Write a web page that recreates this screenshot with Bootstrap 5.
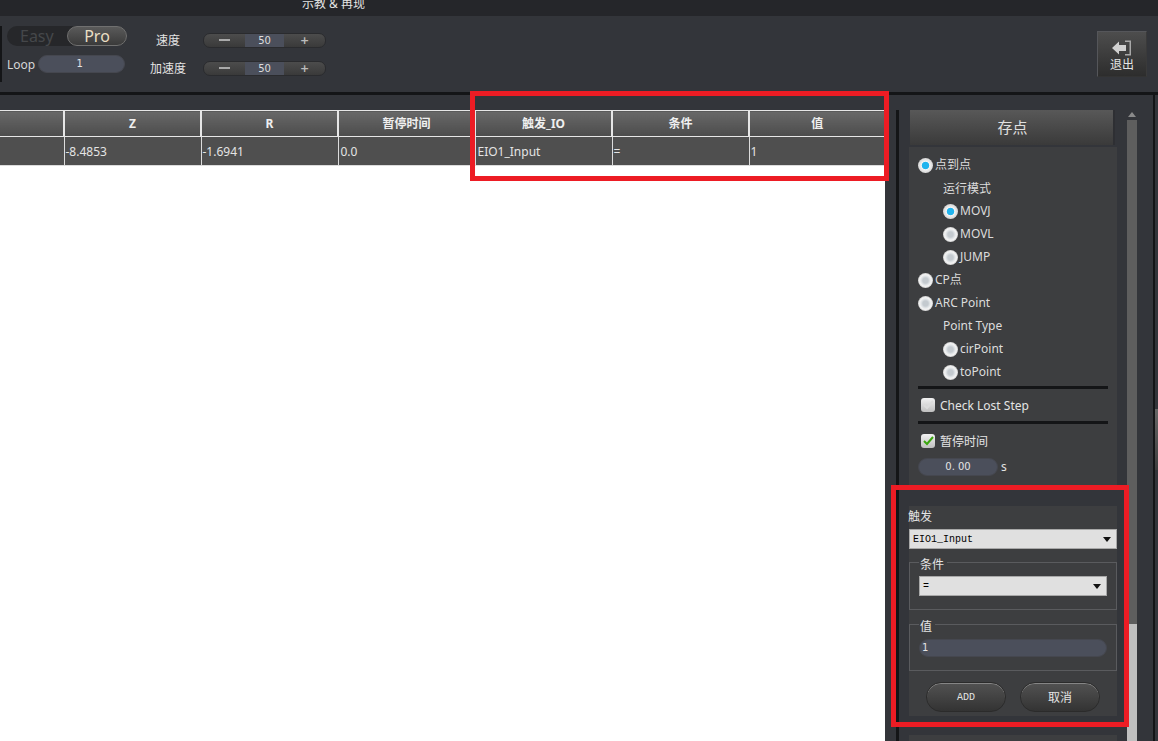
<!DOCTYPE html>
<html lang="en">
<head>
  <meta charset="UTF-8">
  <meta name="viewport" content="width=device-width, initial-scale=1">
  <title>示教 & 再现</title>
  <link href="https://cdn.jsdelivr.net/npm/bootstrap@5.3.0/dist/css/bootstrap.min.css" rel="stylesheet">
  <style>
    html, body { height: 741px; overflow: hidden; }
    body {
      background: #33353a;
      color: #e4e4e4;
      font-family: "Noto Sans", "Noto Sans CJK SC", sans-serif;
      font-size: 12px;
      line-height: 1.2;
      position: relative;
    }
    /* title strip */
    .title-strip { height: 16px; background: #25262a; overflow: hidden; padding-left: 302px; }
    .title-strip span { display: block; margin-top: -4px; font-size: 12px; line-height: 16px; }

    /* toolbar */
    .tool-strip { height: 76px; background: #33353a; position: relative; }
    .left-tick { width: 2px; height: 56px; margin-top: 10px; background: #141517; flex: none; }
    .mode-col { width: 120px; margin-left: 5px; padding-top: 10px; flex: none; }
    .mode-switch { width: 120px; height: 20px; border-radius: 10px; background: #26272a; display: flex; justify-content: space-between; font-size: 16px; line-height: 20px; }
    .mode-easy { color: #45474a; padding-left: 13px; }
    .mode-pro { width: 60px; text-align: center; border-radius: 10px; color: #eadfc4; background: linear-gradient(#5a5a5a, #3a3a3a); border: 1px solid #707070; line-height: 18px; }
    .loop-row { margin-top: 9px; display: flex; align-items: center; gap: 3px; font-size: 12px; color: #d6d6d6; }
    .loop-row > span { padding-top: 2px; }
    .pill-input { background: #4b4f5b; border-radius: 9px; border: 1px solid #45474f; color: #e4e4e4; text-align: center; height: 18px; line-height: 16px; font-size: 10px; font-family: "DejaVu Sans", sans-serif; }
    .loop-pill { width: 87px; padding-right: 4px; }
    .speed-col { margin-left: 15px; padding-top: 10px; flex: none; }
    .speed-row { display: flex; align-items: center; height: 28px; }
    .speed-label { width: 52px; text-align: center; font-size: 12px; margin-right: 9px; color: #e4e4e4; padding-top: 2px; }
    .stepper { width: 123px; height: 15px; display: flex; border-radius: 7px; overflow: hidden; border: 1px solid #2a2b2e; background: linear-gradient(#4c4c4c, #3a3a3a); color: #bbb; text-align: center; }
    .step-side { flex: 1; display: flex; align-items: center; justify-content: center; font-family: "DejaVu Sans", sans-serif; font-weight: 700; font-size: 11px; line-height: 13px; }
    .step-minus { width: 11px; height: 2px; background: #aaa; }
    .step-val { width: 39px; flex: none; background: #4b4f5b; color: #ddd; font-size: 10px; line-height: 13px; font-family: "DejaVu Sans", sans-serif; }
    .exit-btn { position: absolute; left: 1097px; top: 15px; width: 50px; height: 46px; background: linear-gradient(#4d4d4d, #2d2d2d); border: 1px solid #55565a; border-right-color: #3a3a3a; border-bottom-color: #333; text-align: center; font-size: 12px; line-height: 14px; padding-top: 8px; }
    .exit-btn svg { display: block; margin: 0 auto 2px; }

    .black-bar { height: 3px; background: #141517; }

    /* main */
    .main-area { height: 646px; }
    .table-col { width: 885px; padding-top: 15px; flex: none; display: flex; flex-direction: column; }
    .point-table { width: 885px; table-layout: fixed; border-collapse: collapse; font-size: 12px; margin: 0; }
    .point-table th { height: 26px; background: linear-gradient(#686868, #4c4c4c); color: #efefef; text-align: center; font-weight: 700; border: 1px solid #e6e6e6; border-left-width: 2px; padding: 2px 0 0; }
    .point-table td { height: 29px; background: #4f4f4f; color: #e4e4e4; border: 1px solid #dcdcdc; padding: 2px 2px 0 1px; }
    .point-table td.cell-pad { padding-left: 2px; }
    .point-table tr > :first-child { border-left: 0; }
    .white-pane { flex: 1; background: #fff; }

    .side-col { width: 273px; flex: none; display: flex; padding-top: 15px; }
    .black-rule { width: 3px; margin-left: 11px; background: #141517; flex: none; }
    .panel-col { width: 208px; margin-left: 10px; flex: none; }
    .save-btn { width: 205px; height: 35px; margin-left: 1px; padding-left: 2px; background: linear-gradient(#585858, #3a3a3a); border-right: 2px solid #2e2f33; text-align: center; font-size: 15px; line-height: 35px; color: #e0e0e0; }
    .side-panel { background: #3d3e40; margin-top: 2px; height: 340px; padding: 7px 0 0 9px; }
    .opt-row { height: 23px; display: flex; align-items: center; font-size: 12px; color: #dcdcdc; }
    .opt-sub { padding-left: 25px; }
    .opt-cap { padding-left: 25px; padding-top: 1px; }
    .radio-dot { width: 15px; height: 15px; border-radius: 50%; background: radial-gradient(closest-side, #c4cacf 0 35%, #dde1e4 55%, #f4f4f4 78%, #cfcfcf 100%); flex: none; margin-right: 2px; }
    .radio-on { background: radial-gradient(closest-side, #21b4ee 0 45%, #f4f4f4 55%, #d4d4d4 100%); }
    .rule-line { width: 190px; height: 3px; background: #141517; }
    .rule-first { margin-top: 2px; }
    .check-row { height: 32px; display: flex; align-items: center; padding-left: 3px; gap: 5px; font-size: 12px; }
    .check-text { padding-top: 2px; }
    .check-time { margin-top: 1px; }
    .check-box { width: 14px; height: 14px; border-radius: 3px; background: linear-gradient(#f2f2f2, #bfbfbf); display: flex; align-items: center; justify-content: center; flex: none; }
    .time-row { display: flex; align-items: center; gap: 3px; margin-top: 1px; }
    .time-pill { width: 80px; }
    .trig-panel { background: #3d3e40; margin-top: 19px; height: 210px; }
    .trig-label { font-size: 12px; height: 23px; line-height: 22px; margin-left: -1px; }
    .combo-box { height: 20px; background: #e0e0e0; border: 1px solid #a8a8a8; color: #000; font-family: "Liberation Mono", monospace; font-size: 10px; line-height: 18px; padding: 1px 0 0 3px; display: flex; justify-content: space-between; align-items: center; }
    .combo-arrow { width: 0; height: 0; border: 4px solid transparent; border-top: 5px solid #111; border-bottom: 0; margin-right: 5px; }
    .group-box { border: 1px solid #5a5b5e; padding: 0 9px; margin-top: 13px; }
    .group-title { display: block; width: fit-content; height: 14px; background: #3d3e40; padding: 0 3px 0 1px; margin-top: -6px; font-size: 12px; line-height: 16px; }
    .cond-box { height: 48px; }
    .cond-box .group-title { margin-bottom: 5px; }
    .val-box { height: 47px; margin-top: 14px; }
    .val-box .group-title { margin-bottom: 6px; }
    .val-pill { height: 18px; text-align: left; padding-left: 2px; }
    .btn-row { display: flex; justify-content: center; gap: 14px; margin-top: 11px; }
    .round-btn { width: 80px; height: 30px; border-radius: 15px; background: linear-gradient(#525252, #333); border: 1px solid #2b2b2b; box-shadow: inset 0 1px 0 #858585; text-align: center; line-height: 30px; font-size: 12px; color: #e4e4e4; }
    .btn-mono { font-family: "Liberation Mono", monospace; font-size: 10px; }
    .next-panel { background: #3d3e40; margin-top: 19px; height: 6px; }

    .scroll-col { width: 10px; margin-left: 10px; flex: none; display: flex; flex-direction: column; }
    .scroll-arrow { height: 10px; flex: none; display: flex; justify-content: center; padding-top: 2px; }
    .scroll-arrow i { width: 0; height: 0; border: 4px solid transparent; border-bottom: 5px solid #8a8a8a; border-top: 0; }
    .scroll-thumb { height: 504px; background: #5e5e5e; flex: none; }
    .scroll-track { flex: 1; background: #c0c0c0; }
    .edge-rule { width: 2px; margin-left: 16px; background: #141517; margin-top: -15px; flex: none; }
    .edge-thumb { width: 3px; height: 61px; margin-top: 299px; background: linear-gradient(#666, #3e3e3e); flex: none; }

    /* red marks over the screenshot */
    .red-mark { position: absolute; border: 5px solid #ed1c24; }
    .mark-table { left: 470px; top: 91px; width: 419px; height: 90px; }
    .mark-trig { left: 891px; top: 485px; width: 238px; height: 242px; }
  </style>
</head>
<body>
  <div class="title-strip"><span>示教 &amp; 再现</span></div>

  <div class="tool-strip d-flex">
    <div class="left-tick"></div>
    <div class="mode-col">
      <div class="mode-switch"><span class="mode-easy">Easy</span><span class="mode-pro">Pro</span></div>
      <div class="loop-row"><span>Loop</span><div class="pill-input loop-pill">1</div></div>
    </div>
    <div class="speed-col">
      <div class="speed-row"><span class="speed-label">速度</span><div class="stepper"><div class="step-side"><span class="step-minus"></span></div><div class="step-val">50</div><div class="step-side">+</div></div></div>
      <div class="speed-row"><span class="speed-label">加速度</span><div class="stepper"><div class="step-side"><span class="step-minus"></span></div><div class="step-val">50</div><div class="step-side">+</div></div></div>
    </div>
    <div class="exit-btn">
      <svg width="20" height="16" viewBox="0 0 20 16"><path d="M0 8 7 1.500V5h7v6H7v3.500z" fill="#d0d0d0"/><path d="M13 .5h6v15h-6v-1.500h4.500V2H13z" fill="#a8a8a8"/></svg>
      退出
    </div>
  </div>

  <div class="black-bar"></div>

  <div class="main-area d-flex">
    <div class="table-col">
      <table class="point-table">
        <colgroup><col style="width:64px"><col style="width:137px"><col style="width:137px"><col style="width:137px"><col style="width:137px"><col style="width:137px"><col style="width:136px"></colgroup>
        <thead><tr><th></th><th>Z</th><th>R</th><th>暂停时间</th><th>触发_IO</th><th>条件</th><th>值</th></tr></thead>
        <tbody><tr><td></td><td>-8.4853</td><td>-1.6941</td><td class="cell-pad">0.0</td><td class="cell-pad">EIO1_Input</td><td>=</td><td>1</td></tr></tbody>
      </table>
      <div class="white-pane"></div>
    </div>

    <div class="side-col">
      <div class="black-rule"></div>
      <div class="panel-col">
        <div class="save-btn">存点</div>
        <div class="side-panel">
          <div class="opt-row"><span class="radio-dot radio-on"></span>点到点</div>
          <div class="opt-row opt-cap">运行模式</div>
          <div class="opt-row opt-sub"><span class="radio-dot radio-on"></span>MOVJ</div>
          <div class="opt-row opt-sub"><span class="radio-dot"></span>MOVL</div>
          <div class="opt-row opt-sub"><span class="radio-dot"></span>JUMP</div>
          <div class="opt-row"><span class="radio-dot"></span>CP点</div>
          <div class="opt-row"><span class="radio-dot"></span>ARC Point</div>
          <div class="opt-row opt-sub">Point Type</div>
          <div class="opt-row opt-sub"><span class="radio-dot"></span>cirPoint</div>
          <div class="opt-row opt-sub"><span class="radio-dot"></span>toPoint</div>
          <div class="rule-line rule-first"></div>
          <div class="check-row"><span class="check-box"><svg width="11" height="10" viewBox="0 0 11 10"><path d="M1 5l3 3 6-7" fill="none" stroke="#dcdcdc" stroke-width="2"/></svg></span><span class="check-text">Check Lost Step</span></div>
          <div class="rule-line"></div>
          <div class="check-row check-time"><span class="check-box"><svg width="11" height="10" viewBox="0 0 11 10"><path d="M1 5l3 3 6-7" fill="none" stroke="#3aa60e" stroke-width="2"/></svg></span><span class="check-text">暂停时间</span></div>
          <div class="time-row"><div class="pill-input time-pill">0. 00</div><span>s</span></div>
        </div>
        <div class="trig-panel">
          <div class="trig-label">触发</div>
          <div class="combo-box">EIO1_Input<span class="combo-arrow"></span></div>
          <div class="group-box cond-box">
            <span class="group-title">条件</span>
            <div class="combo-box">=<span class="combo-arrow"></span></div>
          </div>
          <div class="group-box val-box">
            <span class="group-title">值</span>
            <div class="pill-input val-pill">1</div>
          </div>
          <div class="btn-row"><div class="round-btn btn-mono">ADD</div><div class="round-btn">取消</div></div>
        </div>
        <div class="next-panel"></div>
      </div>
      <div class="scroll-col">
        <div class="scroll-arrow"><i></i></div>
        <div class="scroll-thumb"></div>
        <div class="scroll-track"></div>
      </div>
      <div class="edge-rule"></div>
      <div class="edge-thumb"></div>
    </div>
  </div>

  <div class="red-mark mark-table"></div>
  <div class="red-mark mark-trig"></div>

  <script src="https://cdn.jsdelivr.net/npm/bootstrap@5.3.0/dist/js/bootstrap.bundle.min.js"></script>
</body>
</html>
